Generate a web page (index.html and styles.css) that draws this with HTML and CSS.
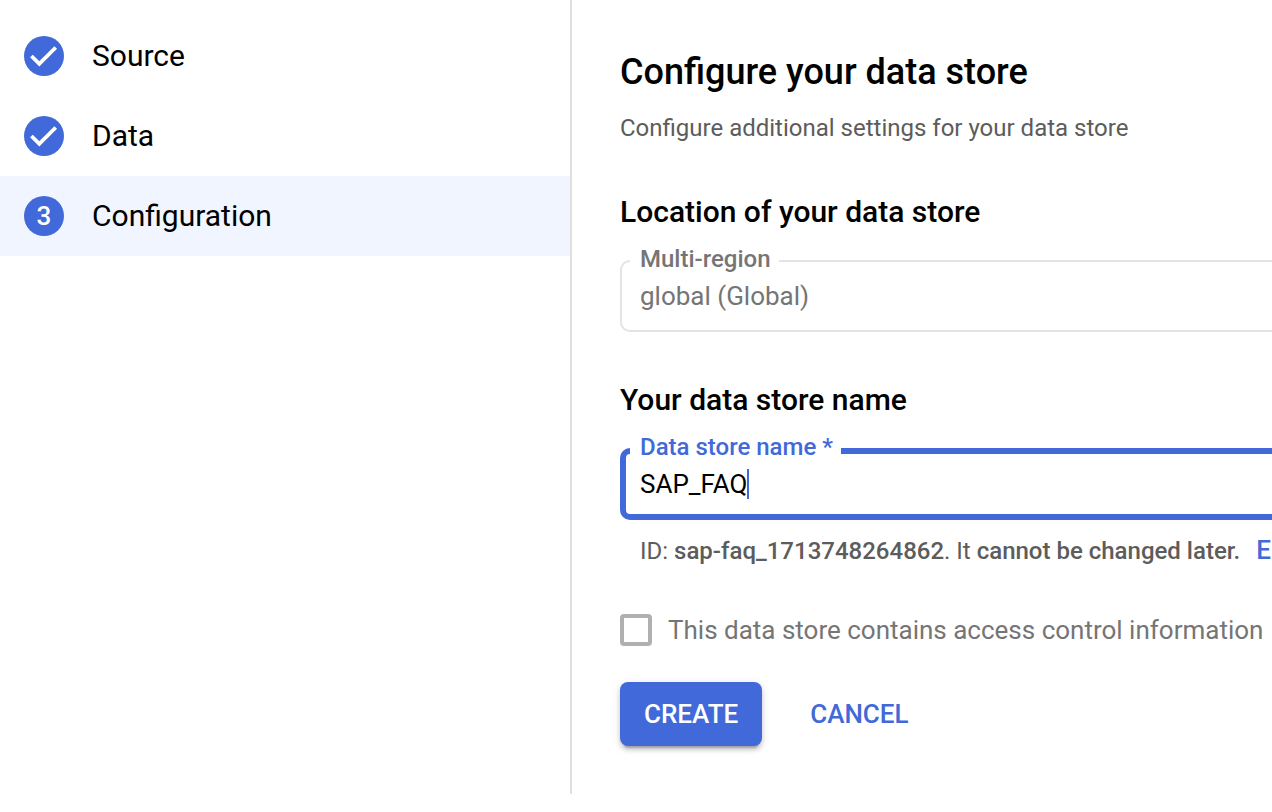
FILE: index.html
```html
<!DOCTYPE html>
<html lang="en">
<head>
<meta charset="utf-8">
<title>Configure your data store</title>
<link rel="stylesheet" href="styles.css">
</head>
<body>
<div class="wizard">
  <nav class="steps" aria-label="Steps">
    <ol class="step-list">
      <li class="step">
        <svg class="badge" viewBox="0 0 40 40" aria-hidden="true"><circle cx="20" cy="20" r="20"/><path d="M7.4 20l7.9 7.9 16.4-16.4"/></svg>
        <span>Source</span>
      </li>
      <li class="step">
        <svg class="badge" viewBox="0 0 40 40" aria-hidden="true"><circle cx="20" cy="20" r="20"/><path d="M7.4 20l7.9 7.9 16.4-16.4"/></svg>
        <span>Data</span>
      </li>
      <li class="step step-current" aria-current="step">
        <span class="badge badge-number">3</span>
        <span>Configuration</span>
      </li>
    </ol>
  </nav>
  <main class="main">
    <form class="form">
      <h1 class="title">Configure your data store</h1>
      <p class="subtitle">Configure additional settings for your data store</p>

      <section class="section">
        <h2 class="heading">Location of your data store</h2>
        <fieldset class="field field-disabled">
          <legend class="field-label"><label for="region">Multi-region</label></legend>
          <select class="control" id="region" disabled><option>global (Global)</option></select>
        </fieldset>
      </section>

      <section class="section">
        <h2 class="heading">Your data store name</h2>
        <fieldset class="field field-active">
          <legend class="field-label"><label for="name">Data store name *</label></legend>
          <div class="entry"><input class="control" id="name" type="text" value="SAP_FAQ" required><span class="caret"></span></div>
        </fieldset>
        <p class="hint">ID: <strong>sap-faq_1713748264862</strong>. It <strong>cannot be changed later.</strong><a class="edit" href="#name">E</a></p>
      </section>

      <div class="check">
        <input class="box" id="acl" type="checkbox" disabled>
        <label for="acl">This data store contains access control information</label>
      </div>

      <div class="actions">
        <button class="button button-primary" type="button">CREATE</button>
        <button class="button" type="button">CANCEL</button>
      </div>
    </form>
  </main>
</div>
</body>
</html>
```
FILE: styles.css
```css
:root {
  --blue: #4169d9;
  --gray: #757575;
  --line: #e0e0e0;
}

* {
  box-sizing: border-box;
}

body {
  margin: 0;
  background: #fff;
  color: #000;
  font-family: Roboto, "Liberation Sans", sans-serif;
}

.wizard {
  display: flex;
}

.steps {
  flex: 0 0 572px;
  padding-top: 16px;
  border-right: 2px solid var(--line);
}

.step-list {
  margin: 0;
  padding: 0;
  list-style: none;
}

.step {
  display: flex;
  align-items: center;
  gap: 28px;
  height: 80px;
  padding: 0 24px;
  font-size: 30px;
  line-height: 34px;
}

.step-current {
  background: #f0f5ff;
}

.badge {
  flex: none;
  width: 40px;
  height: 40px;
}

.badge circle {
  fill: var(--blue);
}

.badge path {
  fill: none;
  stroke: #fff;
  stroke-width: 3.8;
}

.badge-number {
  display: grid;
  place-items: center;
  border-radius: 50%;
  background: var(--blue);
  color: #fff;
  font-size: 26px;
  font-weight: 500;
}

.main {
  flex: 1;
  min-width: 0;
  padding: 48px 0 48px 48px;
  overflow: hidden;
}

.form {
  min-width: 760px;
}

.title {
  margin: 0 0 16px;
  font-size: 36px;
  line-height: 48px;
  font-weight: 500;
}

.subtitle {
  margin: 0;
  color: #5c5c5c;
  font-size: 24px;
  line-height: 32px;
}

.section {
  margin-top: 50px;
}

.heading {
  margin: 0 0 17px;
  font-size: 30px;
  line-height: 36px;
  font-weight: 500;
}

.field {
  min-width: 0;
  margin: 0;
  border-style: solid;
  border-radius: 10px;
}

.field-disabled {
  padding: 0 8px 13px;
  border-width: 2px;
  border-color: #e4e4e4;
  color: var(--gray);
}

.field-active {
  padding: 0 4px 13px;
  border-width: 6px;
  border-color: var(--blue);
  color: var(--blue);
}

.field-label {
  padding: 0 8px 4px 10px;
  font-size: 24px;
  line-height: 24px;
  font-weight: 500;
}

.field-active .field-label {
  padding-bottom: 8px;
}

.control {
  display: block;
  width: 100%;
  height: 42px;
  margin: 0;
  padding: 0 10px;
  border: 0;
  outline: 0;
  background: none;
  appearance: none;
  font: inherit;
  font-size: 26px;
}

.control:disabled {
  color: var(--gray);
  opacity: 1;
}

.entry {
  display: flex;
  align-items: center;
  height: 34px;
  padding-left: 10px;
}

.entry .control {
  width: auto;
  height: 34px;
  padding: 0;
  color: #000;
  field-sizing: content;
}

.caret {
  width: 2px;
  height: 30px;
  background: var(--blue);
}

.hint {
  margin: 15px 0 0;
  padding-left: 20px;
  color: #5c5c5c;
  font-size: 24px;
  line-height: 32px;
  white-space: nowrap;
}

.hint strong {
  font-weight: 500;
}

.edit {
  margin-left: 16px;
  color: var(--blue);
  font-size: 26px;
  line-height: 24px;
  font-weight: 500;
  text-decoration: none;
}

.check {
  display: flex;
  align-items: center;
  gap: 16px;
  height: 32px;
  margin-top: 47px;
  color: var(--gray);
  font-size: 26px;
  white-space: nowrap;
}

.box {
  width: 32px;
  height: 32px;
  margin: 0;
  border: 4px solid #b0b0b0;
  border-radius: 4px;
  appearance: none;
}

.actions {
  display: flex;
  gap: 24px;
  margin-top: 36px;
}

.button {
  height: 64px;
  padding: 0 24px;
  border: 0;
  border-radius: 8px;
  background: none;
  color: var(--blue);
  font: inherit;
  font-size: 26px;
  font-weight: 500;
}

.button-primary {
  background: var(--blue);
  box-shadow: 0 6px 2px -4px rgba(0, 0, 0, 0.2), 0 4px 4px rgba(0, 0, 0, 0.14), 0 2px 10px rgba(0, 0, 0, 0.12);
  color: #fff;
}
```
